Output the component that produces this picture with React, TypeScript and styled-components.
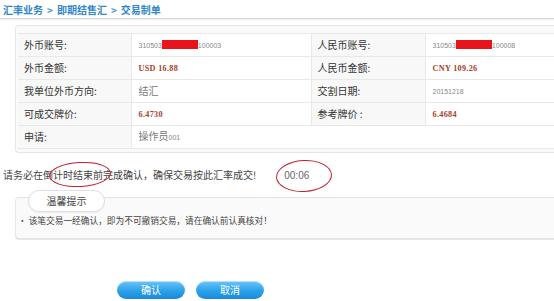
import React from 'react'
import styled, { createGlobalStyle } from 'styled-components'

const GlobalStyle = createGlobalStyle`
  html, body {
    margin: 0;
    padding: 0;
    background: #fff;
    overflow: hidden;
  }
  body {
    font-family: "Noto Sans CJK SC", "Liberation Sans", sans-serif;
    font-size: 12px;
    color: #444;
  }
`

type Row = {
  label: string
  value: React.ReactNode
  label2?: string
  value2?: React.ReactNode
}

const Account = ({ tail }: { tail: string }) => (
  <>
    <StNum>310503</StNum>
    <StMask />
    <StNum>{tail}</StNum>
  </>
)

const App = () => {
  const rows: Row[] = [
    { label: '外币账号:', value: <Account tail="100003" />, label2: '人民币账号:', value2: <Account tail="100008" /> },
    { label: '外币金额:', value: <StAmount>USD 16.88</StAmount>, label2: '人民币金额:', value2: <StAmount>CNY 109.26</StAmount> },
    { label: '我单位外币方向:', value: '结汇', label2: '交割日期:', value2: <StNum>20151218</StNum> },
    { label: '可成交牌价:', value: <StAmount>6.4730</StAmount>, label2: '参考牌价 :', value2: <StAmount>6.4684</StAmount> },
    { label: '申请:', value: <>操作员<StNum>001</StNum></> },
  ]

  return (
    <StPage>
      <GlobalStyle />
      {/* // Breadcrumb */}
      <StCrumb>
        汇率业务<StSep>&gt;</StSep>即期结售汇<StSep>&gt;</StSep>交易制单
      </StCrumb>
      <StDivider />

      {/* // Detail table */}
      <StPanel>
        <StTable>
          <colgroup>
            <col style={{ width: 113 }} />
            <col style={{ width: 180 }} />
            <col style={{ width: 114 }} />
            <col />
          </colgroup>
          <tbody>
            {rows.map((r, i) => (
              <tr key={i}>
                <StLabel>{r.label}</StLabel>
                {r.label2 ? (
                  <>
                    <StValue>{r.value}</StValue>
                    <StLabel>{r.label2}</StLabel>
                    <StValue>{r.value2}</StValue>
                  </>
                ) : (
                  <StValue colSpan={3} $open>{r.value}</StValue>
                )}
              </tr>
            ))}
          </tbody>
        </StTable>
      </StPanel>

      {/* // Countdown */}
      <StNotice>
        请务必在<StCircled $w={60} $h={23} $dx={6}>倒计时结束前</StCircled>完成确认，确保交易按此汇率成交!
        <StTimer>
          <StCircled $w={54} $h={30} $dx={6}>00:06</StCircled>
        </StTimer>
      </StNotice>

      {/* // Tip */}
      <StTipBox>
        <StTipTab>温馨提示</StTipTab>
        <StTipText>· 该笔交易一经确认，即为不可撤销交易，请在确认前认真核对！</StTipText>
      </StTipBox>

      {/* // Buttons */}
      <StButtons>
        <StButton>确认</StButton>
        <StButton>取消</StButton>
      </StButtons>
    </StPage>
  )
}

// Wrapper
const StPage = styled.div`
  width: 620px;
  height: 301px;
`

// Breadcrumb
const StCrumb = styled.div`
  padding: 2px 0 0 3px;
  height: 15px;
  line-height: 15px;
  font-size: 10px;
  font-weight: bold;
  color: #2f86c9;
`
const StSep = styled.span`
  margin: 0 4px;
  color: #4d95cf;
`
const StDivider = styled.div`
  height: 1px;
  margin-top: 1px;
  background: #d9d9d9;
  box-shadow: 0 1px 1px #ececec;
`

// Table
const StPanel = styled.div`
  margin: 6px 0 0 15px;
  padding: 7px 0 3px 2px;
  border: 1px solid #e6e6e6;
  border-right: none;
  border-radius: 4px 0 0 4px;
  background: #fafafa;
`
const StTable = styled.table`
  width: 100%;
  border-collapse: collapse;
  table-layout: fixed;
  tr {
    height: 23px;
  }
  td {
    height: 22px;
    line-height: 14px;
    box-sizing: border-box;
  }
`
const StLabel = styled.td`
  padding: 0 0 0 6px;
  border: 1px solid #e8e8e8;
  border-left: none;
  background: #f8f8f8;
  color: #333;
  font-size: 10px;
  white-space: nowrap;
`
const StValue = styled.td<{ $open?: boolean }>`
  padding: 0 0 0 7px;
  border: 1px solid #e8e8e8;
  border-right: ${(p) => (p.$open ? 'none' : '1px solid #e8e8e8')};
  background: #fff;
  color: #777;
  font-size: 10px;
  white-space: nowrap;
`
const StMask = styled.span`
  display: inline-block;
  width: 36px;
  height: 9px;
  vertical-align: -1px;
  background: #e8141c;
`
const StAmount = styled.span`
  color: #a5402a;
  font-family: "Liberation Serif", "Noto Sans CJK SC", serif;
  font-weight: bold;
  font-size: 8.2px;
  letter-spacing: 0.3px;
`
const StNum = styled.span`
  font-family: "Liberation Sans", sans-serif;
  font-size: 7px;
  color: #888;
`

// Countdown
const StNotice = styled.div`
  margin-top: 14px;
  padding-left: 3px;
  height: 16px;
  line-height: 16px;
  font-size: 10px;
  color: #444;
  white-space: nowrap;
`
const StCircled = styled.span<{ $w: number; $h: number; $dx: number }>`
  position: relative;
  &::after {
    content: '';
    position: absolute;
    left: 50%;
    top: 50%;
    width: ${(p) => p.$w}px;
    height: ${(p) => p.$h}px;
    margin-left: ${(p) => -p.$w / 2 + p.$dx}px;
    margin-top: ${(p) => -p.$h / 2 - 1}px;
    border: 1px solid #c4202e;
    border-radius: 50%;
    transform: rotate(-3deg);
  }
`
const StTimer = styled.span`
  display: inline-block;
  margin-left: 28px;
  font-family: "Liberation Sans", sans-serif;
  font-size: 10px;
  color: #666;
`

// Tip
const StTipBox = styled.div`
  position: relative;
  margin: 14px 0 0 15px;
  height: 40px;
  border-top: 1px solid #e2e2e2;
  border-left: 1px solid #e8e8e8;
  border-radius: 4px 0 0 4px;
  background: #fafafa;
  box-shadow: 0 2px 1px #e4e4e4;
`
const StTipTab = styled.div`
  position: absolute;
  left: 12px;
  top: -8px;
  width: 77px;
  height: 22px;
  line-height: 20px;
  box-sizing: border-box;
  border: 1px solid #e0e0e0;
  border-radius: 11px;
  background: #fff;
  box-shadow: 0 1px 1px #ededed;
  text-align: center;
  font-size: 10px;
  color: #444;
`
const StTipText = styled.div`
  padding: 17px 0 0 2px;
  line-height: 12px;
  font-size: 8.7px;
  color: #444;
  white-space: nowrap;
`

// Buttons
const StButtons = styled.div`
  display: flex;
  gap: 11px;
  margin-top: 43px;
  padding-left: 117px;
`
const StButton = styled.button`
  width: 68px;
  height: 18px;
  padding: 0;
  border: none;
  border-radius: 9px;
  background: linear-gradient(#6cc6f7, #2aa0ea 55%, #1b8ad8);
  box-shadow: inset 0 1px 0 rgba(255, 255, 255, 0.5);
  color: #fff;
  font-family: "Noto Sans CJK SC", sans-serif;
  font-size: 10px;
  line-height: 18px;
`

export default App
